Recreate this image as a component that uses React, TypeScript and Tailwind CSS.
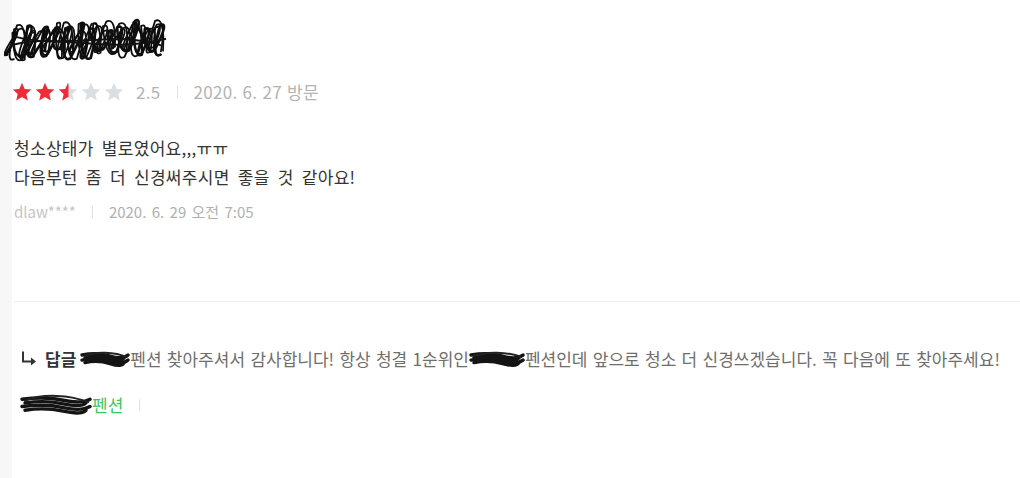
import type { ReactNode } from 'react';

const font = { fontFamily: '"Noto Sans CJK KR", "Noto Sans", sans-serif' };

// small seeded random so the marker scribbles stay the same on every render
function rng(seed: number) {
  let s = seed;
  return () => {
    s = (s * 16807) % 2147483647;
    return (s - 1) / 2147483646;
  };
}

function Scribble({ w, h, seed = 7, passes = 4, steps = 24 }: { w: number; h: number; seed?: number; passes?: number; steps?: number }) {
  const r = rng(seed);
  const paths: string[] = [];
  for (let p = 0; p < passes; p++) {
    const forward = p % 2 === 0;
    let d = '';
    for (let i = 0; i <= steps; i++) {
      const t = forward ? i / steps : 1 - i / steps;
      const x = 6 + (w - 14) * t + (r() - 0.5) * 8;
      const top = h * 0.04 + r() * h * 0.22 + (1 - t) * h * 0.1;
      const bot = h * 0.7 + r() * h * 0.26 - t * h * 0.12;
      const y = i % 2 === 0 ? bot : top;
      const cx = x + (i % 2 === 0 ? -10 : 10);
      d += i === 0 ? `M${x.toFixed(1)} ${y.toFixed(1)}` : ` Q${cx.toFixed(1)} ${(y + (i % 2 === 0 ? 5 : -5)).toFixed(1)} ${x.toFixed(1)} ${y.toFixed(1)}`;
    }
    paths.push(d);
  }
  return (
    <svg width={w} height={h} viewBox={`0 0 ${w} ${h}`} className="shrink-0">
      {paths.map((d, i) => (
        <path key={i} d={d} fill="none" stroke="#0e0e0e" strokeWidth={i === 0 ? 2.6 : 1.8} strokeLinejoin="round" strokeLinecap="round" />
      ))}
      <path d={`M6 ${h * 0.6} C ${w * 0.3} ${h * 0.3}, ${w * 0.6} ${h * 0.8}, ${w - 6} ${h * 0.45}`} fill="none" stroke="#111" strokeWidth="2" />
      <path d={`M10 ${h * 0.4} C ${w * 0.35} ${h * 0.7}, ${w * 0.65} ${h * 0.25}, ${w - 10} ${h * 0.6}`} fill="none" stroke="#111" strokeWidth="2" />
    </svg>
  );
}

function Blot({ w, h }: { w: number; h: number }) {
  // flat stacked marker strokes, as on the pension name in the reply
  const rows = [0.28, 0.42, 0.56, 0.7];
  return (
    <svg width={w} height={h} viewBox={`0 0 ${w} ${h}`} className="shrink-0">
      {rows.map((k, i) => (
        <path
          key={k}
          d={`M${2 + (i % 2) * 3} ${h * k} Q ${w * 0.35} ${h * k - 3} ${w * 0.6} ${h * k + 1} T ${w - 2 - (i % 2) * 4} ${h * k}`}
          fill="none"
          stroke="#141414"
          strokeWidth="3.4"
          strokeLinecap="round"
        />
      ))}
      <path d={`M4 ${h * 0.35} C ${w * 0.3} ${h * 0.05}, ${w * 0.7} ${h * 0.1}, ${w - 3} ${h * 0.4}`} fill="none" stroke="#222" strokeWidth="2" />
    </svg>
  );
}

function Star({ fill }: { fill: 'full' | 'half' | 'empty' }) {
  const d = 'M10 0.8l2.7 6.1 6.6.6-5 4.4 1.5 6.5L10 15l-5.8 3.4 1.5-6.5-5-4.4 6.6-.6z';
  return (
    <svg width="20" height="20" viewBox="0 0 20 20">
      <defs>
        <clipPath id="half-star">
          <rect x="0" y="0" width="10.5" height="20" />
        </clipPath>
      </defs>
      <path d={d} fill={fill === 'full' ? '#ee2b37' : '#dcdfe2'} />
      {fill === 'half' ? <path d={d} fill="#ee2b37" clipPath="url(#half-star)" /> : null}
    </svg>
  );
}

function ReplyArrow() {
  return (
    <svg width="18" height="18" viewBox="0 0 18 18" className="shrink-0">
      <path d="M3 1.5v10h9" fill="none" stroke="#333" strokeWidth="2" />
      <path d="M11 7.5l5 4-5 4z" fill="#333" />
    </svg>
  );
}

function Bar() {
  return <span className="mx-4 inline-block h-3 w-px bg-[#e2e2e2]" />;
}

function Row({ children, className }: { children: ReactNode; className?: string }) {
  return <div className={`flex items-center ${className ?? ''}`}>{children}</div>;
}

export default function App() {
  return (
    <main className="flex h-[478px] w-[1020px] overflow-hidden bg-white" style={font}>
      <div className="w-3 shrink-0 bg-[#f7f7f7]" />
      <div className="flex-1 pt-[18px]">
        <div className="-ml-2">
          <Scribble w={168} h={46} seed={11} />
        </div>

        <Row className="mt-[15px] text-[17px] tracking-[0.3px] text-[#b3b3b3]">
          <div className="flex gap-[3px]">
            <Star fill="full" />
            <Star fill="full" />
            <Star fill="half" />
            <Star fill="empty" />
            <Star fill="empty" />
          </div>
          <span className="ml-[12px]">2.5</span>
          <Bar />
          <span className="[word-spacing:1px]">2020. 6. 27 방문</span>
        </Row>

        <div className="mt-[28px] px-[2px] text-[17px] leading-[29px] tracking-[0.3px] text-[#333] [word-spacing:4px]">
          <p>청소상태가 별로였어요,,,ㅠㅠ</p>
          <p>다음부턴 좀 더 신경써주시면 좋을 것 같아요!</p>
        </div>

        <Row className="mt-[10px] px-[2px] text-[15px]">
          <span className="text-[#c6c6c6]">dlaw****</span>
          <Bar />
          <span className="text-[#b0b0b0] [word-spacing:2px]">2020. 6. 29 오전 7:05</span>
        </Row>

        <div className="ml-[2px] mt-[78px] h-px bg-[#efefef]" />

        <Row className="mt-[44px] pl-2 text-[17px] text-[#6e6e6e] [word-spacing:1.5px]">
          <ReplyArrow />
          <span className="ml-[7px] font-bold text-[#333]">답글</span>
          <span className="ml-[4px]"><Blot w={50} h={18} /></span>
          <span className="whitespace-nowrap">펜션 찾아주셔서 감사합니다! 항상 청결 1순위인</span>
          <Blot w={56} h={18} />
          <span className="whitespace-nowrap">펜션인데 앞으로 청소 더 신경쓰겠습니다. 꼭 다음에 또 찾아주세요!</span>
        </Row>

        <Row className="mt-[20px] pl-2 text-[17px]">
          <Blot w={72} h={26} />
          <span className="text-[#43c35e]">펜션</span>
          <Bar />
        </Row>
      </div>
    </main>
  );
}
